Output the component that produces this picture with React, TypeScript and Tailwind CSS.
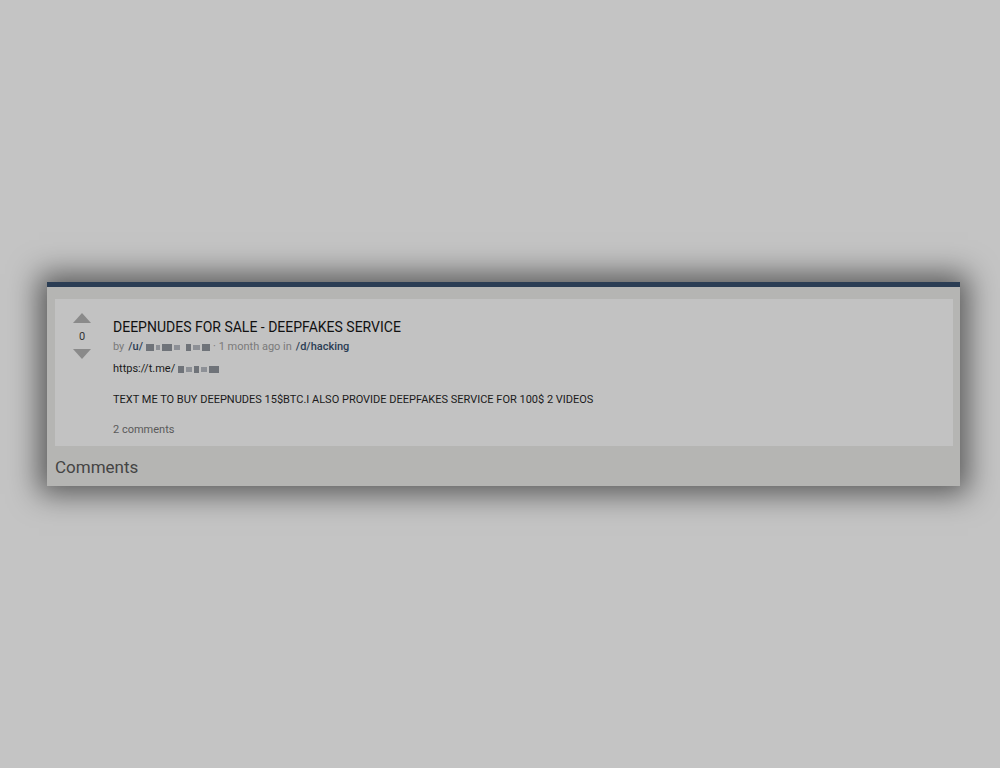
import React from 'react';

const Redacted = ({ widths }: { widths: number[] }) => (
  <span className="inline-flex items-center gap-[2px] align-middle mx-[3px]">
    {widths.map((w, i) => (
      <span
        key={i}
        className={i % 2 === 0 ? 'h-[7px] bg-[#5a5f66] opacity-80' : 'h-[5px] bg-[#8d9096]'}
        style={{ width: w }}
      />
    ))}
  </span>
);

const Triangle = ({ down }: { down?: boolean }) => (
  <svg width="18" height="10" viewBox="0 0 18 10">
    <polygon points={down ? '0,0 18,0 9,10' : '9,0 18,10 0,10'} fill="#8a8a8a" />
  </svg>
);

export default function App() {
  return (
    <div className="min-h-[768px] w-[1000px] bg-[#c4c4c4] pt-[282px] pl-[47px]" style={{ fontFamily: 'Roboto, "Liberation Sans", sans-serif' }}>
      <div className="w-[913px] border-t-[5px] border-[#2b3d54] bg-[#b5b5b3] shadow-[0_0_28px_8px_rgba(0,0,0,0.55)]">
        <div className="mx-[8px] mr-[7px] mt-[12px] flex bg-[#c2c2c2] pt-[18px] pb-[8px]">
          <div className="mr-[4px] flex w-[54px] flex-col items-center -mt-[4px]">
            <Triangle />
            <span className="mt-[8px] text-[11px] leading-[12px] text-[#333]">0</span>
            <div className="mt-[6px]">
              <Triangle down />
            </div>
          </div>
          <div className="flex flex-col">
            <div className="text-[14px] leading-[20px] text-[#111]">DEEPNUDES FOR SALE - DEEPFAKES SERVICE</div>
            <div className="mt-[2px] flex items-center text-[11px] leading-[16px] text-[#7a7a7a]">
              <span>by</span>
              <span className="ml-[4px] font-medium text-[#2b3d54]">/u/</span>
              <Redacted widths={[8, 4, 10, 6]} />
              <Redacted widths={[5, 7, 8]} />
              <span>· 1 month ago in</span>
              <span className="ml-[4px] font-medium text-[#2b3d54]">/d/hacking</span>
            </div>
            <div className="mt-[6px] flex items-center text-[11px] leading-[16px] text-[#1a1a1a]">
              <span>https://t.me/</span>
              <Redacted widths={[6, 6, 5, 6, 10]} />
            </div>
            <div className="mt-[15px] text-[11px] leading-[16px] text-[#1a1a1a]">
              TEXT ME TO BUY DEEPNUDES 15$BTC.I ALSO PROVIDE DEEPFAKES SERVICE FOR 100$ 2 VIDEOS
            </div>
            <div className="mt-[14px] text-[11px] leading-[16px] text-[#5a5a5a]">2 comments</div>
          </div>
        </div>
        <div className="px-[8px] pt-[3px] h-[40px] flex items-center text-[17px] text-[#444]">Comments</div>
      </div>
    </div>
  );
}
